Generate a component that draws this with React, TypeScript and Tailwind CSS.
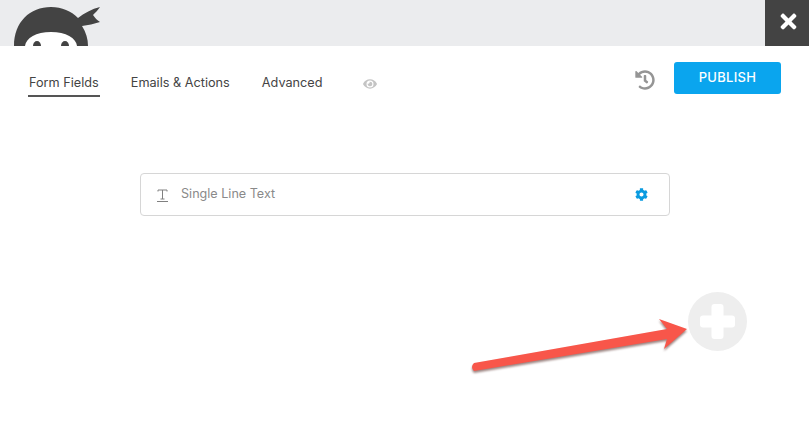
import { FaCog, FaEye, FaHistory, FaTimes } from 'react-icons/fa';

function NinjaLogo() {
  return (
    <svg width="100" height="46" viewBox="0 0 100 46" className="block">
      <path d="M14 46 C14 22 30 7 51 7 C62 7 71 11 78 18 C84 13 92 9 100 7 C98 10 95 13 93 15 C95 18 97 20 100 22 C94 24 88 25 82 26 C86 32 88 39 88 46 Z" fill="#434343" />
      <path d="M25 46 C26 38 36 32 51 32 C66 32 76 38 77 46 Z" fill="#ffffff" />
      <ellipse cx="37" cy="46" rx="4" ry="5" fill="#434343" />
      <ellipse cx="65" cy="46" rx="4" ry="5" fill="#434343" />
    </svg>
  );
}

function Tab({ label, active }: { label: string; active?: boolean }) {
  return (
    <div className={`h-[26px] pt-[2px] px-[1px] text-[12.7px] leading-[20px] text-[#444444] ${active ? 'border-b-2 border-[#555555]' : ''}`}>
      {label}
    </div>
  );
}

export default function App() {
  return (
    <div className="relative w-[809px] h-[423px] bg-white overflow-hidden font-['Inter',sans-serif]">
      <div className="flex justify-between h-[46px] bg-[#ebecee] overflow-hidden">
        <NinjaLogo />
        <div className="flex items-center justify-center w-[44px] h-[46px] bg-[#434343] pb-[3px] pl-[3px]">
          <FaTimes size={23} className="text-white" />
        </div>
      </div>

      <div className="flex items-start justify-between pt-[25px] pl-[28px] pr-[28px]">
        <div className="flex items-center gap-[30px]">
          <Tab label="Form Fields" active />
          <Tab label="Emails & Actions" />
          <Tab label="Advanced" />
          <FaEye size={14} className="ml-[10px] text-[#c4c4c4]" />
        </div>
        <div className="flex items-center gap-[19px] -mt-[9px]">
          <FaHistory size={20} className="text-[#959595] mt-[3px]" />
          <button className="w-[107px] h-[32px] rounded-[3px] bg-[#0aa5ee] text-white text-[13px] font-medium tracking-[0.3px]">
            PUBLISH
          </button>
        </div>
      </div>

      <div className="flex items-center justify-between ml-[140px] mt-[76px] w-[530px] h-[43px] rounded-[4px] border border-[#d6d6d6] pl-[16px] pr-[21px]">
        <div className="flex items-center gap-[13px] text-[12.6px] text-[#8a8a8a]">
          <svg width="11" height="13" viewBox="0 0 11 13" fill="none" stroke="#808080" strokeWidth="1" className="mt-[3px]">
            <path d="M1 2.5 V1 H10 V2.5 M5.5 1 V10 M3.5 10 H7.5 M0 12.5 H11" />
          </svg>
          <span>Single Line Text</span>
        </div>
        <FaCog size={13} className="text-[#0a9be0]" />
      </div>

      <div className="absolute left-[688px] top-[292px] flex items-center justify-center w-[59px] h-[59px] rounded-full bg-[#eeeeee]">
        <svg width="35" height="35" viewBox="0 0 35 35" fill="#ffffff">
          <rect x="0" y="11.5" width="35" height="12" rx="3" />
          <rect x="11.5" y="0" width="12" height="35" rx="3" />
        </svg>
      </div>

      <svg width="240" height="100" viewBox="0 0 240 100" className="absolute left-[460px] top-[290px] drop-shadow-[0_2px_1px_rgba(90,50,45,0.6)]">
        <path d="M14 73 L207 39 L199 29 L227 39 L204 59 L207 49 L14 81 Q10 77 14 73 Z" fill="#f8564a" />
      </svg>
    </div>
  );
}
